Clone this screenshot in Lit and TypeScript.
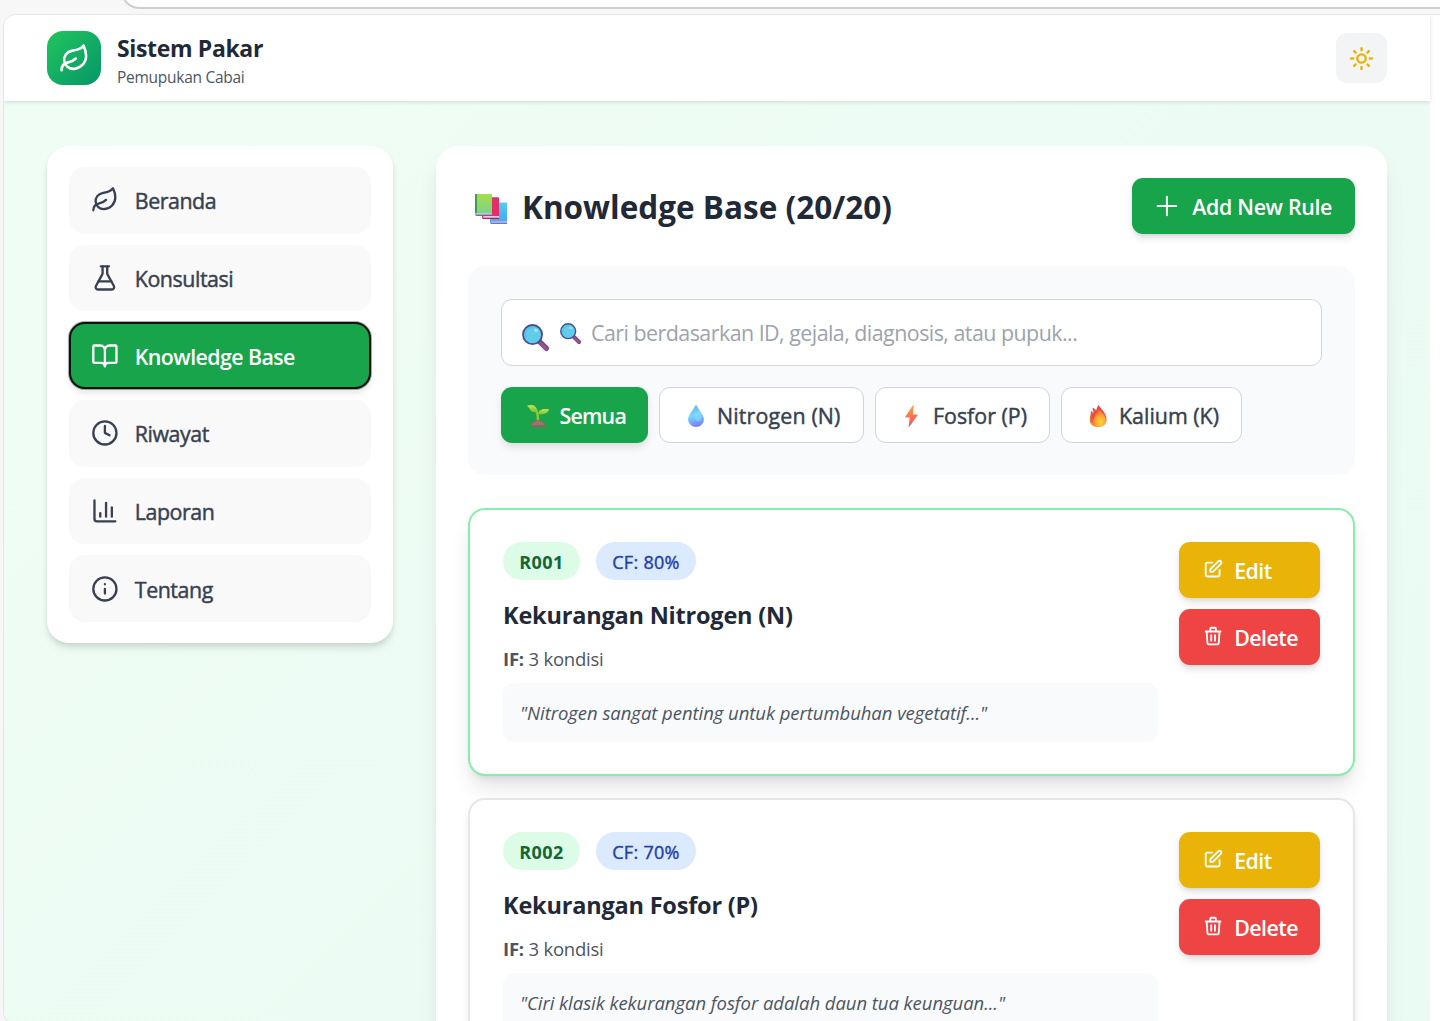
import { LitElement, html, svg, css } from "lit";
import { customElement, property } from "lit/decorators.js";

const ICONS: Record<string, unknown> = {
  leaf: svg`<path d="M11 20A7 7 0 0 1 9.8 6.1C15.5 5 17 4.48 19 2c1 2 2 4.18 2 8 0 5.5-4.78 10-10 10Z"/><path d="M2 21c0-3 1.85-5.36 5.08-6C9.5 14.52 12 13 13 12"/>`,
  flask: svg`<path d="M14 2v6a2 2 0 0 0 .245.96l5.51 10.08A2 2 0 0 1 18 22H6a2 2 0 0 1-1.755-2.96l5.51-10.08A2 2 0 0 0 10 8V2"/><path d="M6.453 15h11.094"/><path d="M8.5 2h7"/>`,
  book: svg`<path d="M12 7v14"/><path d="M3 18a1 1 0 0 1-1-1V4a1 1 0 0 1 1-1h5a4 4 0 0 1 4 4 4 4 0 0 1 4-4h5a1 1 0 0 1 1 1v13a1 1 0 0 1-1 1h-6a3 3 0 0 0-3 3 3 3 0 0 0-3-3z"/>`,
  clock: svg`<circle cx="12" cy="12" r="10"/><path d="M12 6v6l4 2"/>`,
  chart: svg`<path d="M3 3v16a2 2 0 0 0 2 2h16"/><path d="M18 17V9"/><path d="M13 17V5"/><path d="M8 17v-3"/>`,
  info: svg`<circle cx="12" cy="12" r="10"/><path d="M12 16v-4"/><path d="M12 8h.01"/>`,
  sun: svg`<circle cx="12" cy="12" r="4"/><path d="M12 2v2"/><path d="M12 20v2"/><path d="m4.93 4.93 1.41 1.41"/><path d="m17.66 17.66 1.41 1.41"/><path d="M2 12h2"/><path d="M20 12h2"/><path d="m6.34 17.66-1.41 1.41"/><path d="m19.07 4.93-1.41 1.41"/>`,
  plus: svg`<path d="M12 4v16m8-8H4"/>`,
  edit: svg`<path d="M11 5H6a2 2 0 00-2 2v11a2 2 0 002 2h11a2 2 0 002-2v-5m-1.414-9.414a2 2 0 112.828 2.828L11.828 15H9v-2.828l8.586-8.586z"/>`,
  trash: svg`<path d="M19 7l-.867 12.142A2 2 0 0116.138 21H7.862a2 2 0 01-1.995-1.858L5 7m5 4v6m4-6v6m1-10V4a1 1 0 00-1-1h-4a1 1 0 00-1 1v3M4 7h16"/>`,
};

@customElement("line-icon")
export class LineIcon extends LitElement {
  @property() name = "leaf";
  static styles = css`
    :host { display: block; flex: none; width: 27.8px; height: 27.8px; }
    svg { display: block; width: 100%; height: 100%; fill: none; stroke: currentColor; stroke-width: var(--stroke, 2); stroke-linecap: round; stroke-linejoin: round; overflow: visible; }
  `;
  render() {
    return html`<svg viewBox="0 0 24 24">${ICONS[this.name]}</svg>`;
  }
}

const EMOJI: Record<string, unknown> = {
  books: svg`
    <defs>
      <linearGradient id="g" x1="0" y1="0" x2="0" y2="1"><stop offset="0" stop-color="#a6dd4b"/><stop offset="1" stop-color="#72d391"/></linearGradient>
      <linearGradient id="b" x1="0" y1="0" x2="0" y2="1"><stop offset="0" stop-color="#55cdf8"/><stop offset="1" stop-color="#3ba6ee"/></linearGradient>
    </defs>
    <path d="M15.5 8.5H31a1 1 0 0 1 1 1V29.6H16.5a1.5 1.5 0 0 1-1.5-1.5Z" fill="url(#b)"/>
    <path d="M16 26.8h16v2.4H17a1.2 1.2 0 0 1-1-1.2Z" fill="#b4a7e2"/>
    <path d="M15 28.9h17v1.2H16.4Z" fill="#4a84d8"/>
    <path d="M7 4.2q0-1 1-1H23a1 1 0 0 1 1 1V25H8.5A1.5 1.5 0 0 1 7 23.5Z" fill="#e0306a"/>
    <path d="M8 22h16v2.2H8.6Z" fill="#f3c9e0"/>
    <path d="M7.3 23.8H24v1.3H8.6Z" fill="#bd1c50"/>
    <path d="M0 1a1 1 0 0 1 1-1H16a1 1 0 0 1 1 1V21.8H1.5A1.5 1.5 0 0 1 0 20.3Z" fill="url(#g)"/>
    <path d="M0 1a1 1 0 0 1 1-1h1v19H0Z" fill="#3f9b52"/>
    <path d="M1 19h16v2.1H1.6Z" fill="#c6bfe0"/>
    <path d="M.2 20.7H17v1.1H1.6Z" fill="#58508a"/>`,
  search: svg`
    <path d="M20.5 20.5 29 29" stroke="#7b4b85" stroke-width="6.2" stroke-linecap="round"/>
    <path d="M22 22.6 28.6 29.2" stroke="#92588e" stroke-width="3" stroke-linecap="round"/>
    <circle cx="12.5" cy="12.5" r="11.3" fill="#62cdea" stroke="#4a4f8d" stroke-width="2.2"/>
    <path d="M5.5 16.5a8.5 8.5 0 0 1 12-11.2" fill="none" stroke="#55c2e6" stroke-width="1.6"/>
    <ellipse cx="16.5" cy="7.5" rx="2.4" ry="1.8" transform="rotate(35 16.5 7.5)" fill="#a6e4fb"/>`,
  sprout: svg`
    <defs><linearGradient id="l" x1="0" y1="0" x2="0" y2="1"><stop offset="0" stop-color="#c3e64c"/><stop offset="1" stop-color="#7cbf3c"/></linearGradient></defs>
    <path d="M15.8 24C16.4 18 15.8 13 13.5 8.5" fill="none" stroke="#8cc63f" stroke-width="3.4" stroke-linecap="round"/>
    <path d="M0 1C6-1.2 14-.5 16 10 9 11 5.5 9.500 4.500 6.500 3.500 4 1.500 3 0 1Z" fill="url(#l)"/>
    <path d="M16 13.500C17 6.500 23 5 32 6.3 31 11 27 14.500 16 13.500Z" fill="url(#l)"/>
    <path d="M5 32C4.500 26 10 22.300 15.800 22.300S27.300 26 26.800 32Z" fill="#8c6064"/>
    <path d="M6 29.500C8 25 12 23 16 23S24 25 26 29.500Z" fill="#a0706a"/>`,
  drop: svg`
    <defs><linearGradient id="d" x1=".4" y1="0" x2=".6" y2="1"><stop offset="0" stop-color="#69b7df"/><stop offset=".45" stop-color="#7bd5fc"/><stop offset="1" stop-color="#7379ff"/></linearGradient></defs>
    <path d="M14.8 1C15.5-.2 16.5-.2 17.2 1 21 8.5 27.5 14.5 27.5 21A11.5 11 0 0 1 4.500 21C4.500 14.500 11 8.500 14.800 1Z" fill="url(#d)"/>
    <ellipse cx="19" cy="17" rx="5" ry="7" fill="#84e2ff" opacity=".55"/>`,
  bolt: svg`
    <defs><linearGradient id="z" x1="0" y1="0" x2=".2" y2="1"><stop offset="0" stop-color="#ffb143"/><stop offset=".5" stop-color="#fb7d45"/><stop offset="1" stop-color="#fa4f74"/></linearGradient></defs>
    <path d="M17 .6 6.200 17.200q-.5.9.5.9h6L11.200 31q.1 1.500 1 .5L24 14.800q.4-1-.5-1h-6.200L18.500.8q-.4-1.500-1.500-.2Z" fill="url(#z)"/>`,
  fire: svg`
    <defs>
      <linearGradient id="f" x1="0" y1="0" x2="0" y2="1"><stop offset="0" stop-color="#ea3742"/><stop offset=".6" stop-color="#f8673a"/><stop offset="1" stop-color="#f99d35"/></linearGradient>
      <radialGradient id="y" cx=".6" cy=".75" r=".7"><stop offset="0" stop-color="#ffd436"/><stop offset=".5" stop-color="#ffad35"/><stop offset="1" stop-color="#f8623a"/></radialGradient>
    </defs>
    <path d="M16.200 0C20 5 28.500 12 28.500 21 28.500 28 23 32 16 32S4 28 4 22C4 17 6 13.500 5.500 8.800 8 9.500 8.800 11 9.200 12.500 9.500 9 8.500 6 7.800 4 11 4.500 12.500 6.500 13 8.500 14.300 6 15 3 16.200 0Z" fill="url(#f)"/>
    <path d="M17 6C22 11 27.500 16 27.500 22 27.500 28 22 31.500 16.500 31.500S8 28 8.500 23C9 17 16 14 17 6Z" fill="url(#y)"/>
    <path d="M8.800 13C6.500 17 5.800 21 8 25M12.800 9C10 14 8.500 17 9.500 21" fill="none" stroke="#b8514c" stroke-width="1.200"/>`,
};

@customElement("color-glyph")
export class ColorGlyph extends LitElement {
  @property() name = "books";
  static styles = css`
    :host { display: block; flex: none; width: 22px; height: 22px; }
    svg { display: block; width: 100%; height: 100%; overflow: visible; }
  `;
  render() {
    return html`<svg viewBox="0 0 32 32">${EMOJI[this.name]}</svg>`;
  }
}

interface Rule { id: string; cf: string; title: string; conditions: string; note: string; lead?: boolean; }

const RULES: Rule[] = [
  { id: "R001", cf: "CF: 80%", title: "Kekurangan Nitrogen (N)", conditions: "3 kondisi", note: "\"Nitrogen sangat penting untuk pertumbuhan vegetatif...\"", lead: true },
  { id: "R002", cf: "CF: 70%", title: "Kekurangan Fosfor (P)", conditions: "3 kondisi", note: "\"Ciri klasik kekurangan fosfor adalah daun tua keunguan...\"" },
];

const NAV = [
  { icon: "leaf", label: "Beranda" },
  { icon: "flask", label: "Konsultasi" },
  { icon: "book", label: "Knowledge Base", active: true },
  { icon: "clock", label: "Riwayat" },
  { icon: "chart", label: "Laporan" },
  { icon: "info", label: "Tentang" },
];

const FILTERS = [
  { icon: "sprout", label: "Semua", cls: "semua on" },
  { icon: "drop", label: "Nitrogen (N)", cls: "nitrogen" },
  { icon: "bolt", label: "Fosfor (P)", cls: "fosfor" },
  { icon: "fire", label: "Kalium (K)", cls: "kalium" },
];

@customElement("app-root")
export class AppRoot extends LitElement {
  static styles = css`
    :host { display: block; height: 1021px; overflow: hidden; background: #f7f7f7; font-family: "Open Sans", "Noto Sans", sans-serif; color: #374151; }
    * { box-sizing: border-box; }
    button { font: inherit; color: inherit; border: 0; margin: 0; text-align: left; }
    h1, h2, h3, p { margin: 0; }
    span, h1, h2, h3, p { white-space: nowrap; }

    .chrome { height: 14px; overflow: hidden; padding-left: 120px; }
    .omnibox { height: 40px; margin-top: -31px; margin-right: -30px; background: #fdfdfd; border: 2px solid #cfcfcf; border-radius: 20px; }
    .window { height: 1011px; margin-left: 3px; border: 1px solid #e6e6e6; border-right: 0; border-radius: 13px 0 0 13px; overflow: hidden; background: #fff; padding-right: 10px; }
    .page { height: 1010px; background: linear-gradient(135deg, #f0fdf4, #e9fbf3); }

    header { height: 86px; padding: 0 43px; display: flex; align-items: center; justify-content: space-between; background: #fff; box-shadow: 0 1px 4px rgba(0,0,0,.14); }
    .brand { display: flex; gap: 16px; align-items: center; }
    .logo { width: 54px; height: 54px; border-radius: 16px; background: linear-gradient(135deg, #22c55e, #059669); display: grid; place-items: center; color: #fff; }
    .logo line-icon { width: 31px; height: 31px; }
    .names { height: 56px; }
    .names h1 { font-size: 23px; line-height: 36px; font-weight: 700; color: #1f2937; letter-spacing: -.35px; }
    .names p { font-size: 15.5px; line-height: 22px; color: #4b5563; letter-spacing: -.27px; }
    .theme { width: 51px; height: 50px; border-radius: 11px; background: #f3f4f6; color: #eab308; display: grid; place-items: center; padding: 0; --stroke: 2.3; }
    .theme line-icon { width: 25px; height: 25px; }

    .body { display: flex; align-items: flex-start; gap: 43px; padding: 45px 43px 0; }
    nav { width: 346px; height: 497px; flex: none; background: #fff; border-radius: 22px; padding: 21px 22px; display: flex; flex-direction: column; gap: 11px; box-shadow: 0 6px 9px -1px rgba(0,0,0,.1), 0 3px 6px -2px rgba(0,0,0,.1); }
    .item { height: 66.67px; border-radius: 16px; background: #f9f9f9; display: flex; align-items: center; gap: 16.500px; padding: 0 21.500px; font-size: 21.400px; letter-spacing: -.45px; }
    .item span, .filter span { -webkit-text-stroke: .45px currentColor; }
    .item span { padding-top: 1px; }
    .item.active { background: #18a44a; color: #fff; font-weight: 600; letter-spacing: -.6px; box-shadow: inset 0 0 0 2px #101010, 0 0 0 1px #10101055, 0 4px 6px rgba(0,0,0,.1); }
    .item.active span, .filter.on span { -webkit-text-stroke: 0; }

    main { flex: 1; background: #fff; height: 1100px; border-radius: 22px; padding: 32px; box-shadow: 0 14px 21px -4px rgba(0,0,0,.1), 0 5px 8px -5px rgba(0,0,0,.1); }
    .top { display: flex; justify-content: space-between; align-items: center; height: 56px; }
    .heading { display: flex; align-items: center; gap: 15px; padding-left: 7px; }
    .heading color-glyph { width: 32px; height: 32px; margin-top: 7px; }
    .heading h2 { font-size: 31.500px; line-height: 44px; font-weight: 700; color: #1f2937; padding-top: 2px; }
    .btn { height: 56px; border-radius: 11px; display: flex; align-items: center; color: #fff; font-size: 21.400px; font-weight: 600; box-shadow: 0 5px 8px -1px rgba(0,0,0,.12), 0 2px 5px -2px rgba(0,0,0,.12); }
    .add { width: 223px; background: #18a44a; padding: 0 0 0 21px; gap: 11.500px; letter-spacing: -.35px; --stroke: 1.700; }
    .add line-icon { margin-top: -1px; }

    .panel { margin-top: 32px; height: 209px; border-radius: 17px; background: #f9fafb; padding: 33px; }
    .search { height: 67px; border: 1px solid #d1d5db; border-radius: 11px; background: #fff; display: flex; align-items: center; padding: 0 20px; font-size: 21.400px; color: #9ca3af; letter-spacing: -.52px; }
    .search .big { width: 27px; height: 27px; margin: 10px 11px 0 0; }
    .search .small { width: 21px; height: 21px; margin: 2px 10px 0 0; }
    .filters { display: flex; gap: 11px; margin-top: 21px; }
    .filter { height: 56px; border-radius: 11px; border: 1px solid #d1d5db; background: #fff; display: flex; align-items: center; font-size: 21.400px; padding: 0 0 0 25px; gap: 10px; }
    .filter color-glyph { margin-top: 2px; }
    .on { background: #18a44a; color: #fff; border: 0; font-weight: 600; letter-spacing: -.8px; padding-left: 26px; gap: 10.500px; box-shadow: 0 5px 8px -1px rgba(0,0,0,.12); }
    .semua { width: 147px; }
    .nitrogen { width: 205px; letter-spacing: .15px; }
    .fosfor { width: 175px; }
    .kalium { width: 181px; }

    .rule { display: flex; justify-content: space-between; height: 268px; margin-top: 22px; border: 2px solid #e5e7eb; border-radius: 17px; padding: 32px 33px; background: #fff; box-shadow: 0 5px 8px -1px rgba(0,0,0,.1); }
    .rule.lead { margin-top: 33px; border-color: #86efac; box-shadow: 0 14px 21px -4px rgba(0,0,0,.12), 0 5px 8px -5px rgba(0,0,0,.12); }
    .info { width: 655px; }
    .tags { display: flex; gap: 16px; }
    .tag { height: 38px; border-radius: 19px; display: flex; align-items: center; justify-content: center; padding-top: 2px; font-size: 18px; }
    .id { width: 77px; background: #dcfce7; color: #166534; font-weight: 700; letter-spacing: .4px; }
    .cf { width: 100px; background: #dbeafe; color: #1e40af; letter-spacing: .3px; -webkit-text-stroke: .4px currentColor; }
    .info h3 { margin-top: 16px; font-size: 23.500px; line-height: 38px; font-weight: 700; color: #1f2937; letter-spacing: -.2px; }
    .cond { margin-top: 11px; font-size: 18.500px; line-height: 28px; color: #4b5563; letter-spacing: -.22px; }
    .note { margin-top: 10px; height: 59px; border-radius: 11px; background: #f9fafb; padding: 1px 17px 0; font-size: 18.500px; line-height: 57px; font-style: italic; color: #4b5563; letter-spacing: -.05px; }
    .actions { width: 141px; display: flex; flex-direction: column; gap: 11px; }
    .actions .btn { padding: 0 0 0 22.500px; gap: 10.500px; letter-spacing: -.55px; }
    .actions line-icon { width: 22.200px; height: 22.200px; margin-top: -1px; }
    .btn span, .filter span { padding-top: 0; }
    .yellow { background: #eab308; }
    .red { background: #ef4444; }
  `;

  private renderRule(r: Rule) {
    return html`<article class="rule ${r.lead ? "lead" : ""}">
      <div class="info">
        <div class="tags"><span class="tag id">${r.id}</span><span class="tag cf">${r.cf}</span></div>
        <h3>${r.title}</h3>
        <p class="cond"><b>IF:</b> ${r.conditions}</p>
        <p class="note">${r.note}</p>
      </div>
      <div class="actions">
        <button class="btn yellow"><line-icon name="edit"></line-icon><span>Edit</span></button>
        <button class="btn red"><line-icon name="trash"></line-icon><span>Delete</span></button>
      </div>
    </article>`;
  }

  render() {
    return html`
      <div class="chrome"><div class="omnibox"></div></div>
      <div class="window"><div class="page">
        <header>
          <div class="brand">
            <div class="logo"><line-icon name="leaf"></line-icon></div>
            <div class="names"><h1>Sistem Pakar</h1><p>Pemupukan Cabai</p></div>
          </div>
          <button class="theme"><line-icon name="sun"></line-icon></button>
        </header>
        <div class="body">
          <nav>${NAV.map((n) => html`<button class="item ${n.active ? "active" : ""}"><line-icon name=${n.icon}></line-icon><span>${n.label}</span></button>`)}</nav>
          <main>
            <div class="top">
              <div class="heading"><color-glyph name="books"></color-glyph><h2>Knowledge Base (20/20)</h2></div>
              <button class="btn add"><line-icon name="plus"></line-icon><span>Add New Rule</span></button>
            </div>
            <section class="panel">
              <div class="search"><color-glyph class="big" name="search"></color-glyph><color-glyph class="small" name="search"></color-glyph><span>Cari berdasarkan ID, gejala, diagnosis, atau pupuk...</span></div>
              <div class="filters">${FILTERS.map((f) => html`<button class="filter ${f.cls}"><color-glyph name=${f.icon}></color-glyph><span>${f.label}</span></button>`)}</div>
            </section>
            ${RULES.map((r) => this.renderRule(r))}
          </main>
        </div>
      </div></div>`;
  }
}
